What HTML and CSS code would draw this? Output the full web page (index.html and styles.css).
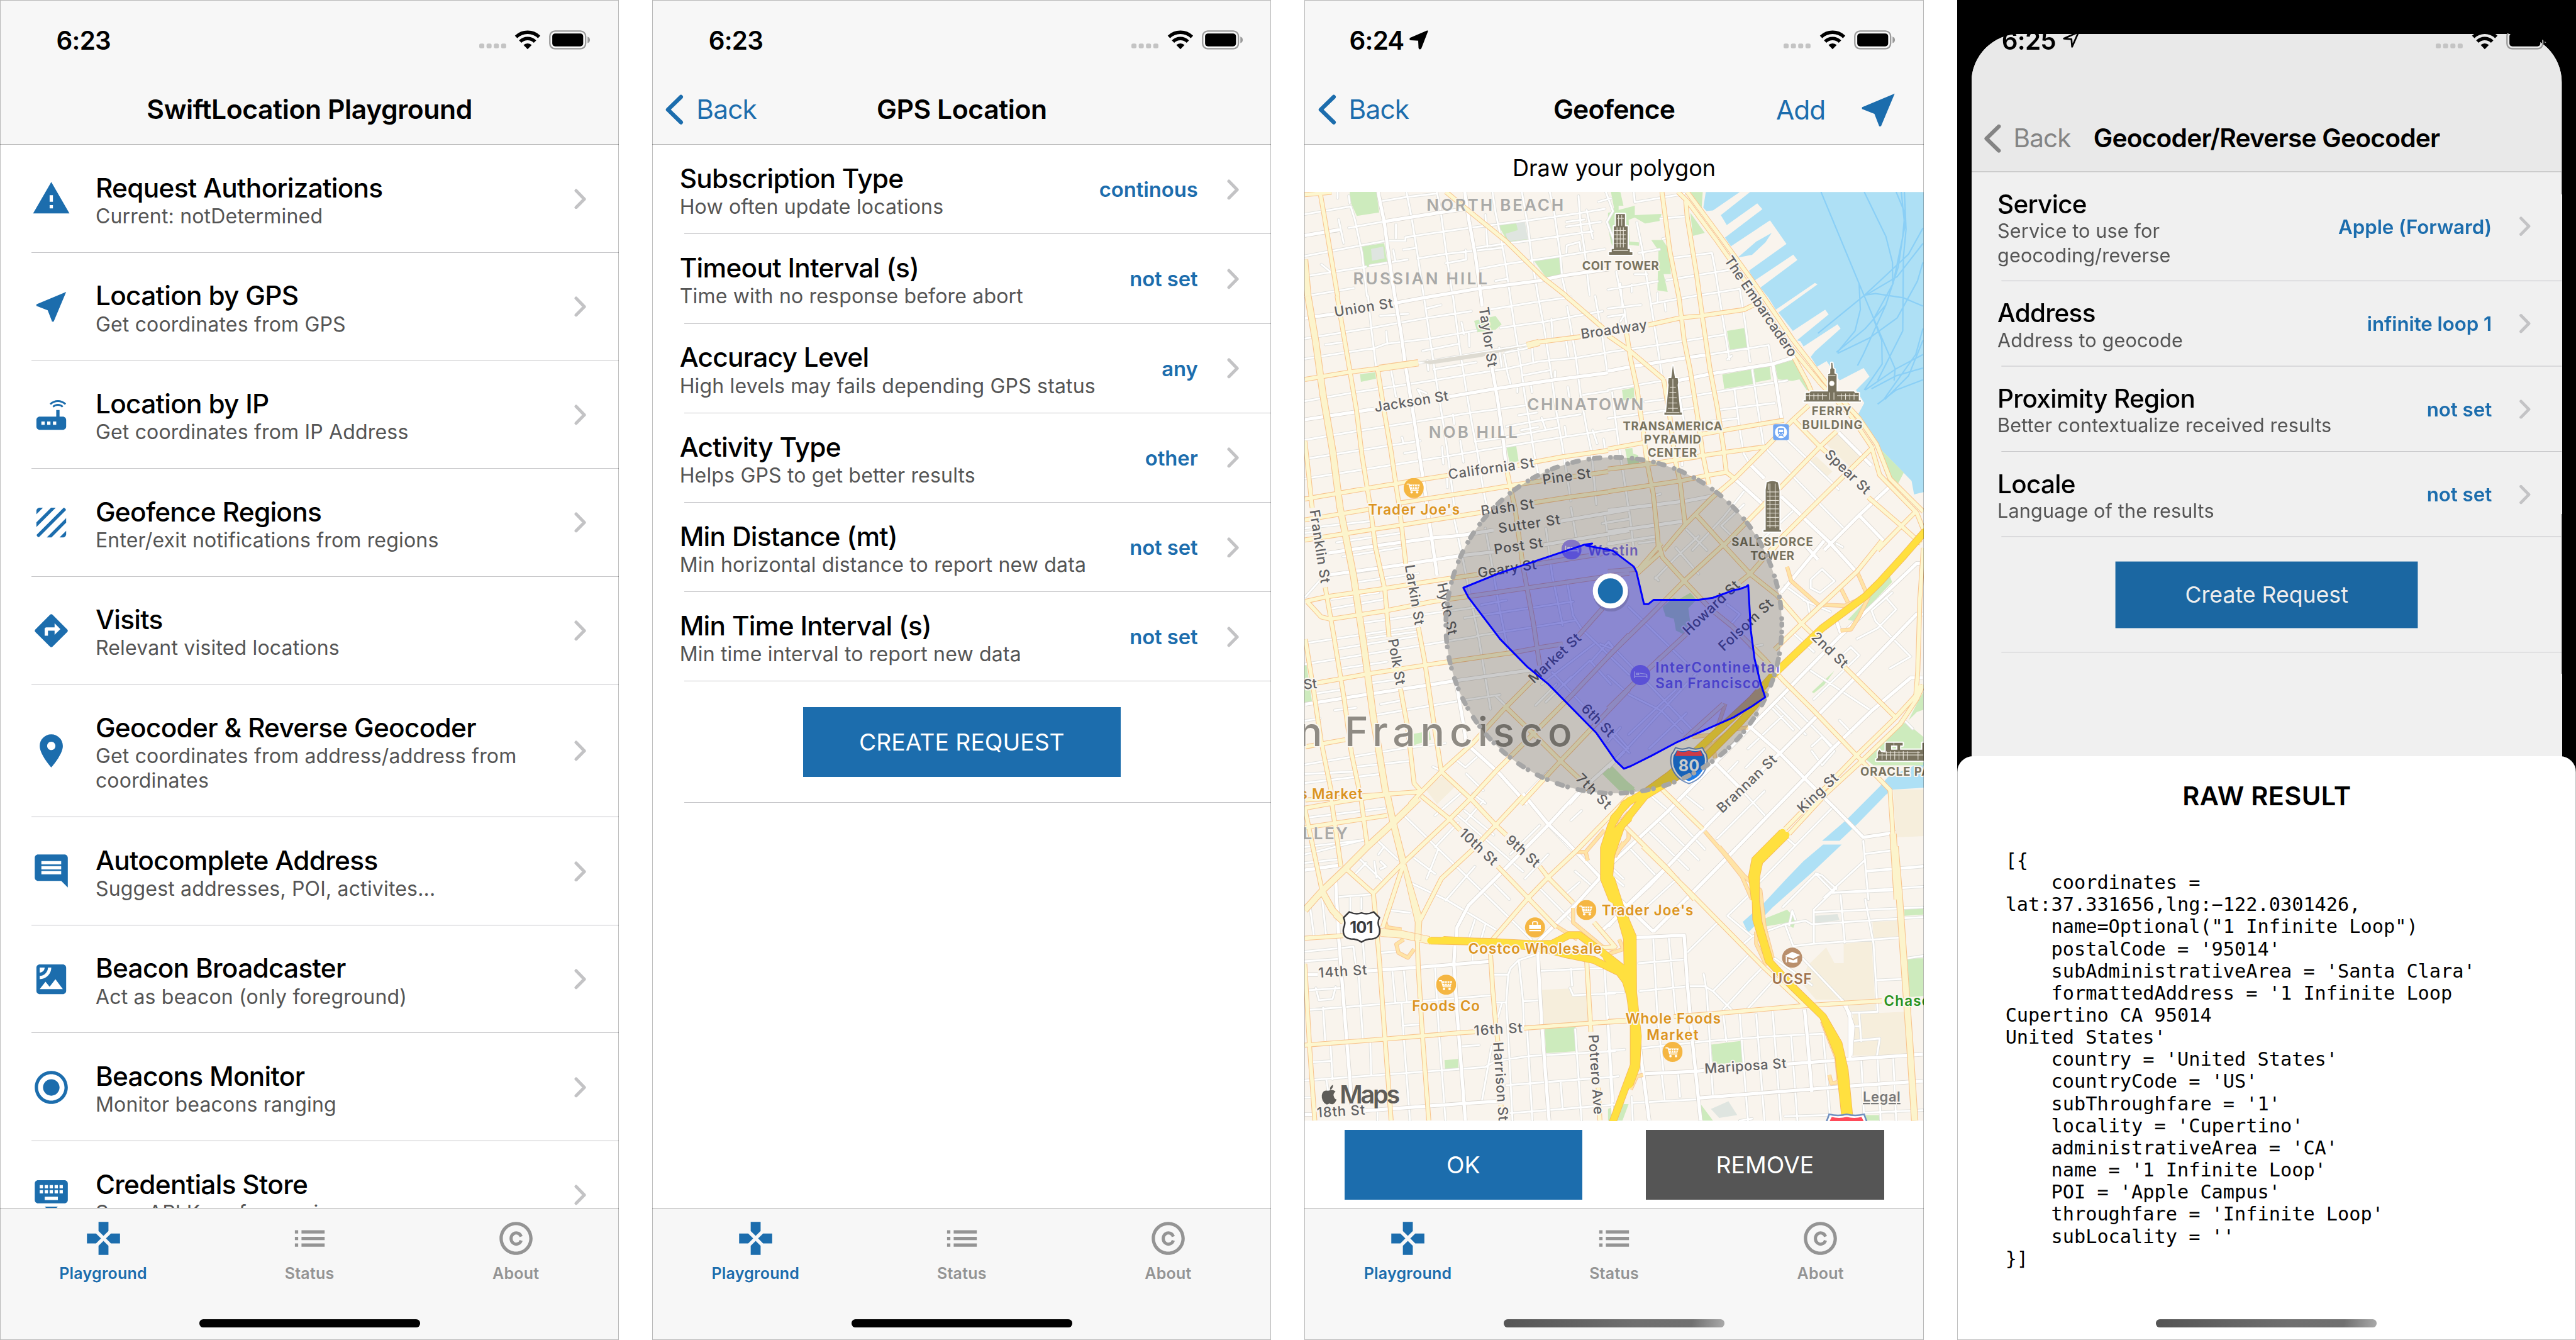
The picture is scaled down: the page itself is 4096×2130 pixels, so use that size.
FILE: index.html
```html
<!DOCTYPE html>
<html lang="en">
<head>
<meta charset="utf-8">
<title>SwiftLocation Playground</title>
<link rel="stylesheet" href="styles.css">
</head>
<body>
<svg class="sprite" aria-hidden="true">
  <symbol id="i-warning" viewBox="0 0 24 24"><path d="M1 21h22L12 2 1 21zm12-3h-2v-2h2v2zm0-4h-2v-4h2v4z"/></symbol>
  <symbol id="i-near" viewBox="0 0 24 24"><path d="M21 3L3 10.53v.98l6.84 2.65L12.48 21h.98L21 3z"/></symbol>
  <symbol id="i-router" viewBox="0 0 24 24"><path d="M20.2 5.9l.8-.8C19.6 3.7 17.8 3 16 3s-3.6.7-5 2.1l.8.8C13 4.8 14.500 4.200 16 4.200s3 .6 4.200 1.700zm-.9.8c-.9-.9-2.100-1.400-3.300-1.400s-2.400.5-3.300 1.400l.8.8c.7-.7 1.600-1 2.500-1 .9 0 1.800.3 2.500 1l.8-.8zM19 13h-2V9h-2v4H5c-1.100 0-2 .9-2 2v4c0 1.100.9 2 2 2h14c1.100 0 2-.9 2-2v-4c0-1.100-.9-2-2-2zM8 18H6v-2h2v2zm3.500 0h-2v-2h2v2zm3.500 0h-2v-2h2v2z"/></symbol>
  <symbol id="i-texture" viewBox="0 0 24 24"><path d="M19.510 3.080L3.080 19.510c.09.34.27.65.51.9.25.24.56.42.9.51L20.930 4.490c-.19-.69-.73-1.230-1.420-1.410zM11.880 3L3 11.880v2.830L14.710 3h-2.830zM5 3c-1.100 0-2 .9-2 2v2l4-4H5zm14 18c.55 0 1.050-.22 1.410-.59.37-.36.59-.86.59-1.410v-2l-4 4h2zm-9.710 0h2.830L21 12.120V9.290L9.290 21z"/></symbol>
  <symbol id="i-directions" viewBox="0 0 24 24"><path d="M21.710 11.290l-9-9c-.39-.39-1.020-.39-1.410 0l-9 9c-.39.39-.39 1.020 0 1.410l9 9c.39.39 1.020.39 1.410 0l9-9c.39-.38.39-1.010 0-1.410zM14 14.500V12h-4v3H8v-4c0-.55.45-1 1-1h5V7.500l3.500 3.500-3.500 3.500z"/></symbol>
  <symbol id="i-place" viewBox="0 0 24 24"><path d="M12 2C8.130 2 5 5.130 5 9c0 5.250 7 13 7 13s7-7.750 7-13c0-3.870-3.130-7-7-7zm0 9.500c-1.380 0-2.500-1.120-2.500-2.500s1.120-2.500 2.500-2.500 2.500 1.120 2.500 2.500-1.120 2.500-2.500 2.500z"/></symbol>
  <symbol id="i-comment" viewBox="0 0 24 24"><path d="M21.990 4c0-1.100-.89-2-1.990-2H4c-1.100 0-2 .9-2 2v12c0 1.100.9 2 2 2h14l4 4-.01-18zM18 14H6v-2h12v2zm0-3H6V9h12v2zm0-3H6V6h12v2z"/></symbol>
  <symbol id="i-satellite" viewBox="0 0 24 24"><path d="M19 3H5c-1.100 0-2 .9-2 2v14c0 1.100.9 2 2 2h14c1.100 0 2-.9 2-2V5c0-1.100-.9-2-2-2zM5 4.990h3C8 6.650 6.660 8 5 8V4.990zM5 12v-2c2.760 0 5-2.250 5-5.010h2C12 8.860 8.870 12 5 12zm0 6l3.500-4.500 2.500 3.010L14.500 12l4.500 6H5z"/></symbol>
  <symbol id="i-radio" viewBox="0 0 24 24"><path d="M12 7c-2.760 0-5 2.240-5 5s2.240 5 5 5 5-2.240 5-5-2.240-5-5-5zm0-5C6.480 2 2 6.480 2 12s4.480 10 10 10 10-4.480 10-10S17.520 2 12 2zm0 18c-4.420 0-8-3.580-8-8s3.580-8 8-8 8 3.580 8 8-3.580 8-8 8z"/></symbol>
  <symbol id="i-keyboard" viewBox="0 0 24 24"><path d="M20 3H4c-1.100 0-1.990.9-1.990 2L2 15c0 1.100.9 2 2 2h16c1.100 0 2-.9 2-2V5c0-1.100-.9-2-2-2zm-9 3h2v2h-2V6zm0 3h2v2h-2V9zM8 6h2v2H8V6zm0 3h2v2H8V9zm-1 2H5V9h2v2zm0-3H5V6h2v2zm9 7H8v-2h8v2zm0-4h-2V9h2v2zm0-3h-2V6h2v2zm3 3h-2V9h2v2zm0-3h-2V6h2v2zm-7 15l4-4H8l4 4z"/></symbol>
  <symbol id="i-games" viewBox="0 0 24 24"><path d="M15 7.500V2H9v5.500l3 3 3-3zM7.500 9H2v6h5.500l3-3-3-3zM9 16.500V22h6v-5.500l-3-3-3 3zM16.500 9l-3 3 3 3H22V9h-5.500z"/></symbol>
  <symbol id="i-list" viewBox="0 0 24 24"><path d="M3 13h2v-2H3v2zm0 4h2v-2H3v2zm0-8h2V7H3v2zm4 4h14v-2H7v2zm0 4h14v-2H7v2zM7 7v2h14V7H7z"/></symbol>
  <symbol id="i-copyright" viewBox="0 0 24 24"><path d="M12 2C6.480 2 2 6.480 2 12s4.480 10 10 10 10-4.480 10-10S17.520 2 12 2zm0 18c-4.410 0-8-3.590-8-8s3.590-8 8-8 8 3.590 8 8-3.590 8-8 8z"/><path d="M15.100 10.900A3.150 3.400 0 1 0 15.100 13.200" fill="none" stroke="currentColor" stroke-width="1.900"/></symbol>
  <symbol id="i-chevron" viewBox="0 0 8 13"><path d="M1.200 1.200L6.400 6.500 1.200 11.800" fill="none" stroke="currentColor" stroke-width="2" stroke-linecap="round" stroke-linejoin="round"/></symbol>
  <symbol id="i-back" viewBox="0 0 12 20"><path d="M10.200 2L2 10l8.200 8" fill="none" stroke="currentColor" stroke-width="2.600" stroke-linecap="round" stroke-linejoin="round"/></symbol>
  <symbol id="i-signal" viewBox="0 0 17 4"><g fill="#c4c4c4"><rect x="0" y=".5" width="3.200" height="3" rx="1"/><rect x="4.600" y=".5" width="3.200" height="3" rx="1"/><rect x="9.200" y=".5" width="3.200" height="3" rx="1"/><rect x="13.800" y=".5" width="3.200" height="3" rx="1"/></g></symbol>
  <symbol id="i-wifi" viewBox="0 0 16 12"><path d="M8 11.500L5.500 9a3.700 3.700 0 0 1 5 0z"/><path d="M3.500 6.900a6.400 6.400 0 0 1 9 0M1 4.100a10 10 0 0 1 14 0" fill="none" stroke="currentColor" stroke-width="2.100"/></symbol>
  <symbol id="i-battery" viewBox="0 0 26 12"><rect x=".5" y=".5" width="22.200" height="11" rx="3.200" fill="none" stroke="#9b9b9b" stroke-width=".9"/><rect x="2" y="2" width="19.200" height="8" rx="1.800"/><path d="M23.900 4v4c1.100-.4 1.500-1.200 1.500-2s-.4-1.600-1.500-2z" fill="#9b9b9b"/></symbol>
  <symbol id="i-cart" viewBox="-19 -19 38 38"><circle r="19" fill="#f5b642"/><path d="M-12.500-7.500h3.800L-5.500 4h14" fill="none" stroke="#fff" stroke-width="2" stroke-linecap="round" stroke-linejoin="round"/><path d="M-8-6.500h19.500L9 1.800H-5.700z" fill="#fff"/><path d="M-2.500-6v7M2-6v7M6.500-6v7M-7-2.400H10" stroke="#f5b642" stroke-width="1.300"/><circle cx="-4" cy="8" r="2.300" fill="#fff"/><circle cx="6.500" cy="8" r="2.300" fill="#fff"/></symbol>
  <symbol id="i-bed" viewBox="-19 -19 38 38"><circle r="19" fill="#a493f5"/><path d="M-11-7V6M-11 2.500H12.500V6M-7-1h4v-2.500h-4zM-1-3.500l11 1.500q2.500.5 2.500 3v2" fill="none" stroke="#fff" stroke-width="1.700"/></symbol>
</svg>

<main class="board">

  <section class="phone">
    <header class="bar">
      <div class="status"><span class="time">6:23</span><svg class="signal"><use href="#i-signal"/></svg><svg class="wifi"><use href="#i-wifi"/></svg><svg class="battery"><use href="#i-battery"/></svg></div>
      <div class="nav"><h1 class="nav-title">SwiftLocation Playground</h1></div>
    </header>
    <ul class="menu">
      <li class="menu-row"><svg class="icon"><use href="#i-warning"/></svg><div class="copy"><h2>Request Authorizations</h2><p>Current: notDetermined</p></div><svg class="chevron"><use href="#i-chevron"/></svg></li>
      <li class="menu-row"><svg class="icon"><use href="#i-near"/></svg><div class="copy"><h2>Location by GPS</h2><p>Get coordinates from GPS</p></div><svg class="chevron"><use href="#i-chevron"/></svg></li>
      <li class="menu-row"><svg class="icon"><use href="#i-router"/></svg><div class="copy"><h2>Location by IP</h2><p>Get coordinates from IP Address</p></div><svg class="chevron"><use href="#i-chevron"/></svg></li>
      <li class="menu-row"><svg class="icon"><use href="#i-texture"/></svg><div class="copy"><h2>Geofence Regions</h2><p>Enter/exit notifications from regions</p></div><svg class="chevron"><use href="#i-chevron"/></svg></li>
      <li class="menu-row"><svg class="icon"><use href="#i-directions"/></svg><div class="copy"><h2>Visits</h2><p>Relevant visited locations</p></div><svg class="chevron"><use href="#i-chevron"/></svg></li>
      <li class="menu-row"><svg class="icon"><use href="#i-place"/></svg><div class="copy"><h2>Geocoder &amp; Reverse Geocoder</h2><p>Get coordinates from address/address from<br>coordinates</p></div><svg class="chevron"><use href="#i-chevron"/></svg></li>
      <li class="menu-row"><svg class="icon"><use href="#i-comment"/></svg><div class="copy"><h2>Autocomplete Address</h2><p>Suggest addresses, POI, activites...</p></div><svg class="chevron"><use href="#i-chevron"/></svg></li>
      <li class="menu-row"><svg class="icon"><use href="#i-satellite"/></svg><div class="copy"><h2>Beacon Broadcaster</h2><p>Act as beacon (only foreground)</p></div><svg class="chevron"><use href="#i-chevron"/></svg></li>
      <li class="menu-row"><svg class="icon"><use href="#i-radio"/></svg><div class="copy"><h2>Beacons Monitor</h2><p>Monitor beacons ranging</p></div><svg class="chevron"><use href="#i-chevron"/></svg></li>
      <li class="menu-row"><svg class="icon"><use href="#i-keyboard"/></svg><div class="copy"><h2>Credentials Store</h2><p>Save API Keys for services</p></div><svg class="chevron"><use href="#i-chevron"/></svg></li>
    </ul>
    <footer class="tabs">
      <div class="tab active"><svg class="icon"><use href="#i-games"/></svg><span>Playground</span></div>
      <div class="tab"><svg class="icon"><use href="#i-list"/></svg><span>Status</span></div>
      <div class="tab"><svg class="icon"><use href="#i-copyright"/></svg><span>About</span></div>
      <div class="home"></div>
    </footer>
  </section>

  <section class="phone">
    <header class="bar">
      <div class="status"><span class="time">6:23</span><svg class="signal"><use href="#i-signal"/></svg><svg class="wifi"><use href="#i-wifi"/></svg><svg class="battery"><use href="#i-battery"/></svg></div>
      <div class="nav"><div class="back"><svg><use href="#i-back"/></svg>Back</div><h1 class="nav-title">GPS Location</h1></div>
    </header>
    <ul class="form">
      <li class="form-row"><div class="copy"><h2>Subscription Type</h2><p>How often update locations</p></div><b>continous</b><svg class="chevron"><use href="#i-chevron"/></svg></li>
      <li class="form-row"><div class="copy"><h2>Timeout Interval (s)</h2><p>Time with no response before abort</p></div><b>not set</b><svg class="chevron"><use href="#i-chevron"/></svg></li>
      <li class="form-row"><div class="copy"><h2>Accuracy Level</h2><p>High levels may fails depending GPS status</p></div><b>any</b><svg class="chevron"><use href="#i-chevron"/></svg></li>
      <li class="form-row"><div class="copy"><h2>Activity Type</h2><p>Helps GPS to get better results</p></div><b>other</b><svg class="chevron"><use href="#i-chevron"/></svg></li>
      <li class="form-row"><div class="copy"><h2>Min Distance (mt)</h2><p>Min horizontal distance to report new data</p></div><b>not set</b><svg class="chevron"><use href="#i-chevron"/></svg></li>
      <li class="form-row"><div class="copy"><h2>Min Time Interval (s)</h2><p>Min time interval to report new data</p></div><b>not set</b><svg class="chevron"><use href="#i-chevron"/></svg></li>
      <li class="form-action"><button class="button">CREATE REQUEST</button></li>
    </ul>
    <footer class="tabs">
      <div class="tab active"><svg class="icon"><use href="#i-games"/></svg><span>Playground</span></div>
      <div class="tab"><svg class="icon"><use href="#i-list"/></svg><span>Status</span></div>
      <div class="tab"><svg class="icon"><use href="#i-copyright"/></svg><span>About</span></div>
      <div class="home"></div>
    </footer>
  </section>

  <section class="phone">
    <header class="bar">
      <div class="status located"><span class="time">6:24</span><svg class="arrow" viewBox="0 0 24 24"><path d="M21.500 2.500L3 10.300q-1.500 1.200 0 1.600l9 .6.400 8.600q.8 1.800 1.800.3z" stroke="#000" stroke-width="1.500" stroke-linejoin="round"/></svg><svg class="signal"><use href="#i-signal"/></svg><svg class="wifi"><use href="#i-wifi"/></svg><svg class="battery"><use href="#i-battery"/></svg></div>
      <div class="nav"><div class="back"><svg><use href="#i-back"/></svg>Back</div><h1 class="nav-title snug">Geofence</h1><div class="tools"><span>Add</span><svg class="locate"><use href="#i-near"/></svg></div></div>
    </header>
    <p class="hint">Draw your polygon</p>
    <svg class="map" viewBox="0 363 1170 1755" preserveAspectRatio="none">
      <defs>
        <g id="minor">
          <path transform="matrix(.38265 0 0 .44643 -6 0)" d="M17 908L245 875 265 930 300 1070 325 1254M235 830L240 860M180 813V840M17 1085L200 1055 420 1020 515 1020V1005L830 965 1110 935 1360 905 1500 885M35 1168L320 1130M340 1125L525 1100M50 1250L260 1220M395 853L520 835 670 820M520 813L545 920 575 1080 605 1254M670 813L690 900 718 1080 748 1254M945 813L960 900 985 1000 1010 1120 1032 1254M1090 813L1120 960 1140 1100 1170 1254M1228 813L1250 900 1280 1080 1290 1180 1310 1254M235 965L400 940M575 1095L720 1075 990 1050M715 1115L815 1100 812 1060M505 1058L570 1050M860 1050L1120 1020 1440 980M870 1140L1000 1120 1280 1085 1500 1055M960 1190L1020 1180M1370 830L1380 950 1400 1060 1425 1250M1410 890L1440 1010M1310 940L1400 930M1310 960L1480 940M1310 1070L1312 1040 1375 1025 1380 1060M1468 855L1530 840M1505 813L1540 895 1510 940 1550 1030M100 1120L150 1155 135 1155M185 930L210 1030M170 980L190 975M455 1060L465 1105M910 910L920 1045M468 950V1010"/>
          <path transform="matrix(.45918 0 0 .33333 -6 560)" d="M275 0L290 200 310 420M505 0L530 240 555 470 580 680 600 860 630 1190M625 0L650 270 680 540 705 740 725 880 750 1100 765 1200M860 0L880 190 905 400 920 560 940 720 960 900 980 1040M975 0L1000 180 1025 400 1050 650 1075 850 1110 1160M1095 60L1130 340 1150 560 1175 750 1195 880 1215 1180M1210 0L1240 230 1260 430M15 240L290 180 510 125 700 85M15 355L300 295 350 270 530 240 720 195M820 180L1000 145 1240 85M780 75L980 30 1110 5M545 415L720 375M500 310L650 270M480 380L930 275M15 595L220 545 440 500 690 445 850 410 980 370 1130 350 1263 320M15 815L250 760 460 715 700 660 920 620M30 920L260 870 490 820M715 825L840 800 1060 745M15 1035L500 930 720 880 850 850 1070 800 1263 760M845 740L940 715 1150 670M895 675L970 660M905 760L975 742M905 782L940 775M370 420L390 570M350 200L355 270M100 275L170 262M660 150L670 215M690 210L692 285M520 365L523 420M815 290L825 400M835 330L850 440 862 500M840 320L930 295M1030 130L1035 230M1090 250L1100 340M950 290L955 370M1045 425V465M580 855L585 950M655 820L668 940M415 800L420 830M425 890L480 878M1200 760L1218 835M1245 810L1250 860M1085 740L1090 790M990 690L1005 750M600 1030L602 1085M625 670L630 725M1160 560L1263 538M910 450L1025 420M890 510V545M945 495L950 545M1098 515L1103 570M515 70L575 50M325 112L440 100M480 530L515 550M480 530L505 590"/>
          <path transform="matrix(.38903 0 0 .44643 574 340)" d="M130 95L370 60M125 52L130 95M255 165L380 155M140 180L165 290 200 480 240 700 265 850M320 330L505 310 520 380 560 600 590 760M580 760L600 745M285 425L600 380M0 465L240 430M210 525L400 495 640 462 665 600 690 770M0 545L160 530M130 400H190M60 440L70 540M115 445V475M240 480V520M275 515L280 555M80 550L95 650M0 730L240 700 570 655M490 740L780 700 795 780M40 390L75 540M265 250L290 245M150 310L250 295M0 890L270 850M340 925L620 885 870 850M615 890L640 1060 660 1160 690 1205M700 800L730 980 755 1120 780 1150M180 940L270 930M530 975L810 945M340 975L420 965M340 1040L630 1010M0 1010L290 975M0 1060L40 1055M20 900L50 1110 75 1250 110 1450 125 1568M780 1150L1150 1480M870 1100L1120 1310M0 1450L100 1437M0 1545L240 1510M550 1465L660 1375M550 1465L640 1540M410 1568L560 1430 660 1320M900 1400L740 1530M230 1335L255 1330M360 1190V1210M1110 1540L1140 1555M60 600L80 570 0 580M350 930L370 1030M380 1480L480 1568"/>
          <path transform="matrix(.39541 0 0 .44643 -6 820)" d="M170 460L480 420M200 520L490 480M240 590L560 545M250 630L560 590M145 740L400 700M145 700L370 672M300 800L830 735M30 885L560 815M180 910L560 855M320 865L550 838M20 975L160 955 580 895 840 858M180 995L410 965M340 1055L460 1040M65 1100L200 1082M160 1170L262 1160M360 1190L760 1130 950 1105M380 1145L470 1130M20 1215L90 1205M690 1310L500 1330 20 1400M260 1410L520 1385M20 1440L250 1430M20 1478L380 1440M20 400L330 370M20 420L90 410M720 313L770 520 800 650 850 870 905 1165M880 400L905 520 950 750 990 920M1170 400L1200 600 1250 810M1290 313L1330 520M860 725L980 705M840 855L1100 820 1310 790M780 780L1000 750 1300 710M1270 620L1300 770 1350 840M1350 835L1568 1020M1170 1135L1290 1030M1200 1010L1500 1290 1568 1350M1430 890L1500 915 1470 880 1390 960M740 1380L785 1412 850 1360M1150 1060L1400 890M1260 1060L1380 960 1480 1060M1220 1060L1120 1150M930 1110L1000 1170M1440 380L1568 360M1450 340L1470 450M1030 1568L1180 1430M790 1440L870 1510M630 1410L680 1430M20 690L90 620"/>
          <path transform="matrix(.38903 0 0 .44643 574 1000)" d="M850 710L1090 920M1280 345L1380 270M1280 345L1300 390 1470 540 1370 590M1400 340L1310 420 1210 465M1400 340L1350 290M1180 500L1220 535 1000 720M1180 500L1130 540M985 600L1280 770M810 740L960 870M680 930L850 790M800 760L900 850M990 920L1040 880 1100 940 1040 1000 990 940M670 1010L760 930M1125 810L1180 860M1440 810L1480 845M210 1130L290 1190 470 1355M250 1240L440 1400M200 1280L390 1440M110 1355L230 1465M380 1130L460 1185M570 1030L770 1220M530 1310L760 1110M570 1040L630 985M910 1340L730 1500M1090 1180L910 1340M870 1310L910 1340M1240 1320L1265 1568M1250 1375L1385 1360M1255 1450L1530 1430M1010 1460L1100 1540M1090 1540L1400 1530M1250 1400L1050 1560M1010 1460L850 1600M0 480L180 640 420 860M100 330L430 610M80 940L260 770 430 610M0 620L100 700 260 770 360 860M0 760L150 640 250 540M100 870L330 680M200 930L380 780M330 80L440 190M230 210L330 120 440 30M230 205L245 218M580 320L640 360 600 400M690 500L750 490M20 850L100 930M990 210L1040 170 1100 220 1030 270 985 250V215M860 240L970 310 980 360M950 300L1080 350M20 1470L75 1510M900 440L1000 520M0 900L60 840M150 60L240 50M0 60L240 30"/>
          <path transform="matrix(.39541 0 0 .45918 -6 1500)" d="M480 80L640 215 790 340 1100 600M655 230L600 350M530 370L700 440 930 560M690 440L830 300M540 265L640 330M750 90L1060 320M870 30L790 110M780 70L920 170M1000 250L1140 130M640 90L760 0M880 40L820 0M1070 350L1180 250M915 365L995 435M1140 390L1290 520M1270 410L1330 365M1310 320L1390 380M1180 130L1300 240M640 220L750 120M180 425L330 415M235 430V490M288 430V475M260 330L310 285M270 260L390 360M360 190L460 270M370 250L395 220M380 310L405 300 380 280M17 650L250 630 260 700M17 690L180 680M295 610L305 720M380 655L450 650M17 810L190 800M70 800L85 850 150 845 165 795M35 890L480 860 910 830M275 750L295 1010M435 720L450 860M490 720L505 860M105 880L115 1020M480 860L490 1000 520 1345M640 715L660 1000 690 1345M485 955L570 950M765 1040L850 1035M140 1030L150 1175M55 1105L145 1100M330 1015L335 1160M17 1180L500 1150 880 1125 930 1100 1090 1080 1500 1060M830 520L800 600M880 540L860 600M920 745L990 745 1000 720 1040 685 1130 660M1040 685L1060 850 1065 960M1060 855L1140 850M990 745L980 860 990 1000 1010 1345M935 860H980M960 860L940 920M1140 730L1500 715M1290 720L1295 790M1285 800L1300 830 1500 822M1450 710L1490 1345M1080 970L1105 1345M910 1040L865 1260M980 1200L1500 1165M1000 1315L1500 1280M1240 1185L1250 1300M1310 970L1340 1345M820 660V690M17 100L400 60M40 450L60 580M100 430L120 590M17 250L300 190M17 285L180 270M17 220L310 190M420 480L520 490M350 280L360 345M1290 110L1340 70M1490 310L1540 350M365 1310V1345M120 1175L130 1230M17 1250H45"/>
          <path transform="matrix(.38903 0 0 .45918 574 1600)" d="M220 380L240 700 270 930M295 375L330 700M150 480L370 465M155 595L390 575 470 575 510 595 610 680M465 525L480 600 510 1030M510 595L690 440M380 440L530 315M580 285L700 370M580 285L690 195M560 670L690 550 760 490M670 675L810 545M560 690L575 800M640 690L680 1128M720 690L760 1128M800 680L840 1128M890 780L920 1128M160 830L490 800 810 780 1045 770 1080 1128M340 930L350 1030M260 930L275 1040M115 1030L120 1128M115 1055L440 1040M0 600H75M0 840L80 835M0 950L50 945M0 700L25 1050M700 370L860 320 960 305 990 320 1530 290M900 410L1000 400 1420 375M1000 400V260L1110 170M1000 270L1530 250M1130 200L1150 395M1090 190L1530 165M860 320L900 410M880 325L895 265 910 300M1010 110L1040 120 1110 175M1255 100L1530 80M1250 218L1290 400 1310 680 1180 685M1300 550L1430 545M945 460L1135 630M1220 690L1230 800M1190 740H1220M1190 800L1320 790 1305 870M1230 870L1245 1128M1310 870L1325 1128M1385 860L1400 1128M1450 460L1530 450M1250 1095L1530 1085M810 460L990 570M860 1110L1070 1105M170 260L340 130M700 1120L640 1128M660 400L700 370"/>
        </g>
        <g id="street">
          <path transform="matrix(.38265 0 0 .44643 -6 0)" d="M380 813L410 940 440 1130 462 1254M808 813L830 940 860 1080 888 1254M17 998L190 973M400 940L545 920 690 900 815 885M455 1285L600 1262 880 1222 1170 1190 1290 1168 1520 1140"/>
          <path transform="matrix(.45918 0 0 .33333 -6 560)" d="M385 0L410 200 430 400 465 700 490 930 515 1150 520 1200M740 0L745 60M785 400L810 600 835 850 842 950M15 125L140 100M15 700L230 655 300 640M610 570L800 525 1040 475 1263 435"/>
          <path transform="matrix(.38903 0 0 .44643 574 340)" d="M0 810L120 790 370 755 490 740M340 850L510 820 800 780 930 745M800 780L820 880 843 1010M0 1400L380 1360 500 1340M0 1490L370 1445M690 1205L760 1265M620 1270L760 1380M840 1340L1070 1530 1110 1568M1380 1290L1220 1420 1050 1568M1120 1070L1280 1210M1220 1420L1340 1530"/>
          <path transform="matrix(.39541 0 0 .44643 -6 820)" d="M602 313L650 600M740 1050L770 1200 790 1310M130 505L390 470 640 440 770 430 920 408M110 600L440 560 770 515 920 500M20 1145L340 1100 600 1065 740 1045 1100 1000M1240 370L1568 320M1160 470L1568 410M800 1320L950 1440 1080 1568M1500 1380L1350 1500 1280 1568"/>
          <path transform="matrix(.38903 0 0 .44643 574 1000)" d="M1050 50L840 270M1070 50L1210 185M960 70L1020 130M1530 145H1500L1120 460 850 700 520 990 290 1195 0 1430M1530 360H1500L1200 630 840 945 700 1060 470 1265 200 1510 100 1590M1530 630H1470L1280 770 1090 930 960 1050 770 1220 580 1390 380 1568M680 830L830 945 960 1060 1100 1180 1240 1305 1400 1285M520 990L640 1095M0 1010L80 940M1110 390L1130 440"/>
          <path transform="matrix(.39541 0 0 .45918 -6 1500)" d="M165 360L180 600 205 880 235 1200 240 1280M17 315L180 295M17 745H80M310 730L560 715 910 690M735 625L730 700 745 900 785 1345M740 600L745 550 800 460 940 340 1180 130 1320 0M1060 0L1180 125 1270 200 1430 345 1320 450 1130 610M1130 650L1150 950 1185 1345M17 1320H60M300 1305L780 1275 960 1265M1430 570L1520 500"/>
          <path transform="matrix(.38903 0 0 .45918 574 1600)" d="M220 350L410 190 620 10M60 220L220 350M95 240L290 80M0 330L60 270M135 375L370 365 385 560 410 800 450 1128M150 800L200 1128M180 935L430 925 470 920M870 895L1110 880 1180 875 1530 855M440 1035L1110 990 1180 985 1530 965M955 670L970 800 990 1010M1135 630L1175 690V870M1150 640L1190 740 1180 860"/>
        </g>
        <g id="avenue">
          <path transform="matrix(.38265 0 0 .44643 -6 0)" d="M17 825L150 815M93 813L115 920 150 1100 180 1254M715 813L830 895 1010 1020 1200 1180 1310 1254"/>
          <path transform="matrix(.45918 0 0 .33333 -6 560)" d="M148 0L170 180 200 420 228 650 250 900 285 1200M15 472L200 430 320 410M315 420L345 680 370 880 390 1070 405 1200M15 820L30 1000 45 1200M15 1150L270 1090 500 1038 610 1015M395 1175L510 1150 750 1100 870 1072 1000 1045 1190 1010 1263 995M890 960L960 940 1080 910 1263 875M842 950L860 1080 880 1200M930 280L980 260 1150 230M1090 0L1200 130 1263 205M960 1170L1100 1140 1263 1110"/>
          <path transform="matrix(.38903 0 0 .44643 574 340)" d="M262 52L300 300 345 500 370 680 400 810 440 1030 460 1160 490 1290M378 90L385 160 430 400 460 590 495 800 530 960 560 1130 575 1240M340 52L385 90 530 260 700 470 860 680 1030 860 1180 1000 1280 1130 1320 1250 1500 1410 1532 1480M385 52L545 240 720 450 900 680 1060 860 1220 1010 1305 1120 1370 1265 1532 1405M905 755L970 860 1010 940M195 615L350 585 460 575 660 550 720 525M0 660L100 720 270 845M90 650L110 760 140 880 170 1060 190 1200 220 1330 240 1500 245 1568M270 845L300 1000 325 1180 350 1280 375 1460M0 1140L190 1110M440 1080L600 1055 855 1018M440 1170L560 1155 770 1130M0 1225L190 1205 440 1172M0 1320L350 1275 490 1250 575 1238 615 1265M975 955L900 1015 770 1130 615 1265 500 1350 375 1460 270 1568M900 1015L1030 1130 1070 1160M1265 1345L1425 1465 1520 1540M1110 1065L1030 1130 840 1300 740 1390 560 1550M1290 1130L1010 1370 860 1500 800 1568M1500 1400L1420 1470 1310 1568M430 1420L560 1545"/>
          <path transform="matrix(.39541 0 0 .44643 -6 820)" d="M115 650L155 850 205 1120 240 1350 280 1520M20 870L60 1090 95 1300 145 1520M331 313L355 480 400 660 420 860M475 1080L510 1250 540 1480 575 1515M470 313L500 550M560 820L590 960 630 1200 670 1430M1022 313L1060 560 1110 800 1140 980M17 365L320 320M17 450L340 405 490 385 740 350 880 330M20 710L120 690 400 655 650 620 850 595M1100 555L1568 490M30 712L95 775 140 785 400 750 630 710 830 685 1568 590M75 1055L330 1015 590 980 860 945 1020 925 1140 905 1250 890M20 1325L210 1295M20 1550L575 1515M1440 740L1300 880M1110 1040L970 1165 820 1310 670 1430 575 1515 520 1568M1568 850L1450 960 1290 1110 1110 1270 940 1420 810 1545M1568 1080L1240 1385 1050 1568M970 1150L1110 1270 1240 1385 1330 1460M670 1430L810 1545"/>
          <path transform="matrix(.38903 0 0 .44643 574 1000)" d="M245 60L265 120 370 220 500 340 600 410 760 550 850 640 1000 770 1220 970 1370 1105 1385 1300M560 67L690 190 820 280 940 400 1000 450M1150 585L1400 800M1532 660L1500 720 1420 825 1235 980 1060 1120 880 1290M1520 660L1490 710 1395 800 1200 965 860 1270M1532 80L1515 300 1505 600 1495 710M560 67L370 220 200 370 0 540M860 20L690 190 640 225M380 445L200 590 0 760M1330 50L1210 180 940 400 810 510M560 740L370 890M0 1230L80 1160M55 1235L280 1430 420 1568M260 1100L460 1270M0 180L150 170 260 60M255 100L140 190"/>
          <path transform="matrix(.39541 0 0 .45918 -6 1500)" d="M17 60L180 35 400 5M17 60L100 400M160 500L200 530M17 140L410 90M140 0L165 150 190 300M283 0L315 210M215 310L345 410 355 500 375 700 400 1000 430 1345M345 410L470 300 710 105 810 20M390 550L470 340 490 290M570 520L670 350 820 230 930 130 1060 10M575 10L710 105 760 150M940 300L1085 430 1220 550M810 20L930 130 980 170M1140 300L1180 345 1300 450M1400 530L1500 630 1360 640M915 600L1085 430 1180 345 1310 240 1490 80 1568 10M17 595L200 585M905 660L915 800 930 950 940 1020M955 1280L960 1345M17 1035L400 1010 750 985 830 980M1065 965L1380 945 1568 935M1365 690L1385 980M1420 1210L1428 1345M17 700L40 1040 65 1345M555 600L560 720 580 1000 610 1345"/>
          <path transform="matrix(.38903 0 0 .45918 574 1600)" d="M170 0L400 190 760 500 950 650M0 720L85 715M320 700L550 685 950 655 1330 635"/>
        </g>
        <g id="boulevard">
          <path transform="matrix(.38265 0 0 .44643 -6 0)" d="M17 1100L33 1254"/>
          <path transform="matrix(.45918 0 0 .33333 -6 560)" d="M28 0L60 260 90 560 130 880 160 1200M320 410L482 378M930 280L980 262"/>
          <path transform="matrix(.39541 0 0 .44643 -6 820)" d="M186 313L250 600 300 900 345 1200 405 1523"/>
          <path transform="matrix(.39541 0 0 .45918 -6 1500)" d="M410 0L440 120 490 290M17 480L100 400 210 310 320 215 440 120 560 20M95 395L150 480 200 525"/>
          <path transform="matrix(.38903 0 0 .45918 574 1600)" d="M1395 0L1415 200 1440 500 1465 800 1490 1128"/>
          <path transform="matrix(.38903 0 0 .44643 574 1000)" d="M1385 1290L1405 1568"/>
        </g>
        <g id="ramp">
          <path transform="matrix(.38903 0 0 .44643 574 1000)" d="M1210 180L1265 290 1220 370 1180 425 1130 430M870 160L890 220 1020 320 1150 325 1240 290M1125 240L1165 310M470 1280L560 1370 650 1470 700 1568M410 880L520 870 570 740M520 970L510 900M680 840L600 850 440 960M30 1270L100 1200M10 1400L100 1310V1270"/>
          <path transform="matrix(.39541 0 0 .45918 -6 1500)" d="M490 600L455 620 465 655 510 675 540 640M400 520L410 550 480 560M1320 240L1360 240 1370 275M1360 240L1450 150M1300 470V530L1440 630 1500 640M1210 540L1320 600M1540 200L1500 260M1520 600L1540 640 1470 660"/>
          <path transform="matrix(.38903 0 0 .45918 574 1600)" d="M540 0L660 120 740 180 760 330 800 460M720 350V400L770 490M110 1000L140 945 170 940M1075 940L1085 975 1115 970M1040 720L1110 870 1120 960"/>
        </g>
        <g id="freeway">
          <path transform="matrix(.38903 0 0 .44643 574 1000)" d="M1540 10L1430 120 1320 225 1250 285 1040 420 800 620 700 720 440 930 300 1040 180 1115 80 1165 15 1255 -20 1350 -20 1480 20 1568M760 700L640 820 480 960 330 1050 180 1130 65 1255 15 1380 5 1480 40 1568M848 1283L715 1400 700 1470 713 1568M866 1295L735 1408 720 1470 718 1568"/>
          <path transform="matrix(.39541 0 0 .45918 -6 1500)" d="M618 605L900 610 1130 620 1200 618 1280 582 1330 582 1420 640 1568 740M680 602L900 612 1100 630M1150 635L1260 660 1400 685 1520 735 1568 790M1575 25L1495 100 1465 190 1458 330 1520 480 1568 600M1568 100L1510 150 1475 240"/>
          <path transform="matrix(.38903 0 0 .45918 574 1600)" d="M5 132L45 240 92 380 95 520 105 600 125 720 125 900 20 1140M15 132L60 250 120 370 122 600 145 780 138 905 105 980M-10 455L40 500 85 550 110 620M715 150L720 300 780 470 900 580 1045 700 1120 860 1152 1110M708 150L730 310 785 470M1045 700L1120 810 1150 920 1172 1110"/>
        </g>
      </defs>

      <rect y="363" width="1170" height="1755" fill="#f9f4ed"/>

      <g class="beige">
        <path transform="matrix(.38903 0 0 .44643 574 340)" d="M1050 1110L1110 1075 1240 1180 1180 1220zM985 1190L1010 1170 1090 1235 1060 1260z"/>
        <path transform="matrix(.38903 0 0 .44643 574 1000)" d="M1385 1103H1532V1300L1400 1305z"/>
        <path transform="matrix(.39541 0 0 .45918 -6 1500)" d="M1150 808L1285 802 1300 835 1370 830 1378 940 1160 950z"/>
        <path transform="matrix(.38903 0 0 .45918 574 1600)" d="M970 490L1060 415 1100 480H1145V400L1280 390 1300 680H1180L1130 630H1010L940 560zM1285 310L1410 305 1420 370 1290 380zM1190 690L1440 680 1455 860H1190z"/>
        <path transform="matrix(.39541 0 0 .44643 -6 820)" d="M590 1500L690 1440 740 1490 650 1568z"/>
      </g>
      <g class="water">
        <path transform="matrix(.38903 0 0 .44643 574 340)" d="M475 52L463 118 478 133 510 130 640 52H690L548 150 577 192 725 100 750 125 568 245 597 282 787 172 867 272 825 298 685 385 710 428 900 317 920 340 740 457 780 500 815 550 1005 437 1018 443 828 562 898 640 1055 550 1072 570 918 680 935 684 950 706 1115 612 1130 630 1005 727 985 750 1015 792 1062 768 1125 850 1242 797 1270 833 1205 890 1245 945 1205 1010 1245 1055 1310 1128 1475 1275 1487 1332 1534 1322V52zM630 330L720 262 795 225 765 265 700 318z"/>
        <path transform="matrix(.38903 0 0 .44643 574 1000)" d="M1360 1050L1534 985V1095L1385 1103 1350 1125 1210 1250 1125 1320H1040L1160 1230 1320 1090z"/>
        <path transform="matrix(.38903 0 0 .45918 574 1600)" d="M1135-8L1000 100 800 250 680 355 655 310 760 230 870 130 950 60 1045-8z"/>
      </g>
      <path class="ferry" transform="matrix(.38903 0 0 .44643 574 340)" d="M1035 52L1220 440 1340 690 1395 800 1390 850M1245 52L1350 240 1382 350 1383 440M1400 52L1442 140 1432 240 1410 370 1350 530 1240 740 1212 787M1440 52L1448 210 1435 330 1432 640 1310 850M1530 205L1460 315 1350 405 1245 490 1020 650M1530 270L1405 410 1250 490M1220 440L1226 550 1200 640 1115 730M1250 488L1300 482 1435 500 1530 535M1350 530L1250 630 1110 730M1530 350L1503 430 1405 585 1270 670 1115 735M1530 630L1495 740 1340 930M1530 740L1400 800 1250 890M1530 797L1400 830 1280 885M1530 847L1400 890 1310 950M1290 590L1330 680 1332 780 1245 890M1530 680L1460 830 1345 930M1425 52L1442 200 1385 440 1290 590"/>
      <g class="park">
        <path transform="matrix(.38265 0 0 .44643 -6 0)" d="M240 813H372L385 900 275 915 240 850zM295 1045L410 1030 425 1110 310 1135zM975 955L1060 945 1120 1015 1020 1025zM1150 1105L1275 1090 1290 1160 1210 1175zM1530 813H1568V1040H1535L1515 940 1545 880z"/>
        <path transform="matrix(.45918 0 0 .33333 -6 560)" d="M242 442L305 432 308 468 246 486zM845 855L885 848 895 935 858 945zM712 140L800 112 825 160 800 190 725 205z"/>
        <path transform="matrix(.38903 0 0 .44643 574 340)" d="M400 140L470 225 412 238zM400 52H460L455 120zM578 640L662 628 678 710 592 720zM555 825L695 803 705 865 565 885zM708 800L785 792 792 845 715 858zM812 785L905 762 985 890H965L930 845 895 852 825 845zM68 890L125 880 128 925 75 935zM0 140L130 110V150L260 145 250 175 180 185 130 160 100 170 105 262 150 265V280L15 270 0 200zM210 255L265 255 300 300 305 400H270L290 475 240 468 245 300zM83 1140L118 1135 122 1160 145 1165 152 1205 98 1208zM1310 1128L1437 1240 1410 1285 1360 1250zM20 52H60L75 110H40z"/>
        <path transform="matrix(.39541 0 0 .44643 -6 820)" d="M15 980L25 975 52 1135 15 1140zM535 1270L615 1258 620 1295 540 1318zM1440 1440L1480 1400 1600 1510H1520z"/>
        <path transform="matrix(.38903 0 0 .44643 574 1000)" d="M265 330L320 290 340 300 400 270 430 300 390 335 400 400 365 445 330 430 320 380 280 370zM1370 200L1380 225 1200 390 1165 385 1265 290zM1400 830L1450 820 1532 880V1000H1290L1245 970zM1532 690V765L1500 775 1460 810 1500 740zM0 1000L130 1095 90 1120 0 1040zM990 690L1100 600 1050 660 1000 695zM470 930L510 895 515 920 480 945z"/>
        <path transform="matrix(.39541 0 0 .45918 -6 1500)" d="M1165 968L1312 960V1060L1170 1068zM685 1097L750 1092 752 1130 688 1134z"/>
        <path transform="matrix(.38903 0 0 .45918 574 1600)" d="M1455 460H1532V615L1465 620zM500 815L648 800 655 890 510 895zM750 300L870 260 915 300 900 335 860 315 760 330zM450 1060L510 1128H460zM0 1080L50 1060H100L70 1128H0zM1440 260L1532 250V280L1440 285zM1250 1105H1320V1128H1250z"/>
      </g>
      <g class="slab">
        <path transform="matrix(.38265 0 0 .44643 -6 0)" d="M345 1055L405 1045 412 1095 350 1105zM1010 990L1070 975 1062 945 1105 940 1120 1012 1022 1022z"/>
        <path transform="matrix(.38903 0 0 .45918 574 1600)" d="M500 1080L585 1048 628 1105 540 1117zM1005 285L1115 278 1125 303 1005 315z"/>
      </g>

      <use href="#minor" class="minor-case"/><use href="#minor" class="minor-fill"/>
      <path transform="matrix(.45918 0 0 .33333 -6 560)" d="M495 372L930 280 740 345 530 387z" fill="#dedbd2"/>
      <use href="#street" class="street-case"/><use href="#street" class="street-fill"/>
      <use href="#ramp" class="ramp-case"/><use href="#ramp" class="ramp-fill"/>
      <use href="#avenue" class="avenue-case"/><use href="#boulevard" class="boulevard-case"/>
      <g class="plaza"><path transform="matrix(.39541 0 0 .45918 -6 1500)" d="M480 290L502 290 578 510 572 606 543 606 545 530zM380 555L480 563 615 588V620L480 595 380 588z"/></g>
      <use href="#avenue" class="avenue-fill"/><use href="#boulevard" class="boulevard-fill"/>
      <use href="#freeway" class="freeway-case"/><use href="#freeway" class="freeway-fill"/>

      <g class="landmark">
        <path d="M589 405h17v23h5v43h4v6h5v5h-44v-5h5v-6h4v-43h4z"/>
        <path d="M696.600 691l4 24h5l1 8-1 5 5 52h3v4h-33v-4h3l5-52-1-5 1-8h5z"/>
        <path d="M996 686h2l1 10 3 2v8l4 2v32h33l2 3h7v14h4v2H944v-2h4v-14h7l2-3h33v-32l4-2v-8l2-2z"/>
        <path d="M874 912q11-5 21 0l3 14v76h3v3h-33v-3h4v-76z"/>
        <path d="M1099 1404h15v5h-5v8h12v-8h-6v-5h16v5h-5v8h42v-13h4v34h-91v-3l3-2v-11l3-5 3 4h9z"/>
      </g>
      <g class="landmark-detail">
        <path d="M591 413h13M594 407v20M600 407v20M586 436h22M586 444h22M586 452h22M586 460h22M591 430v38M597 430v38M603 430v38M584 474h28"/>
        <path d="M696.600 716v62M691 732h11M690 742h13M689 752h15M688 762h17M687 772h19M684 780h25"/>
        <path d="M948 748h40M1007 748h40M955 744v12M963 744v12M971 744v12M979 744v12M1015 744v12M1023 744v12M1031 744v12M1039 744v12M990 710h14M993 742v14M1001 742v14"/><circle cx="997" cy="725" r="4.500"/>
        <path d="M874 930h23M874 938h23M874 946h23M874 954h23M874 962h23M874 970h23M874 978h23M874 986h23M874 994h23M880 914v84M890 914v84M878 914v12"/>
        <path d="M1085 1427h85M1092 1420v16M1100 1420v16M1108 1420v16M1116 1420v16M1124 1420v16M1132 1420v16M1140 1420v16M1160 1420v16M1094 1422h70"/>
      </g>
      <g class="poi-brown">
        <text x="525" y="510.500" textLength="145">COIT TOWER</text>
        <text x="602" y="813" textLength="188">TRANSAMERICA</text>
        <text x="642" y="838" textLength="108">PYRAMID</text>
        <text x="649" y="863" textLength="93">CENTER</text>
        <text x="959" y="785.500" textLength="75">FERRY</text>
        <text x="941" y="811" textLength="114">BUILDING</text>
        <text x="807.500" y="1032.600" textLength="154">SALESFORCE</text>
        <text x="843" y="1058" textLength="83">TOWER</text>
        <text x="1051" y="1466.500" textLength="164">ORACLE PARK</text>
      </g>
      <g class="district">
        <text x="231" y="398.600" textLength="259">NORTH BEACH</text>
        <text x="92" y="537.500" textLength="254">RUSSIAN HILL</text>
        <text x="421" y="775" textLength="220">CHINATOWN</text>
        <text x="235" y="827.700" textLength="168">NOB HILL</text>
        <text x="-52" y="1586" textLength="134">VALLEY</text>
      </g>
      <g class="city">
        <text x="-12" y="1410">n</text>
        <text x="76" y="1410" textLength="430">Francisco</text>
      </g>
      <g class="road">
        <text transform="translate(58 599) rotate(-9)" textLength="112">Union St</text>
        <text transform="translate(330 582) rotate(81.500)" textLength="114">Taylor St</text>
        <text transform="translate(524 641) rotate(-8.500)" textLength="126">Broadway</text>
        <text transform="translate(134 779) rotate(-9)" textLength="141">Jackson St</text>
        <text transform="translate(793 492) rotate(55.900)" textLength="223">The Embarcadero</text>
        <text transform="translate(982 861) rotate(43.800)" textLength="108">Spear St</text>
        <text transform="translate(273 906) rotate(-8)" textLength="164">California St</text>
        <text transform="translate(451.500 916) rotate(-8)" textLength="92">Pine St</text>
        <text transform="translate(335 975) rotate(-8)" textLength="101">Bush St</text>
        <text transform="translate(368 1008) rotate(-8.500)" textLength="118">Sutter St</text>
        <text transform="translate(360 1048) rotate(-8.500)" textLength="93">Post St</text>
        <text transform="translate(329 1092) rotate(-8.500)" textLength="112">Geary St</text>
        <text transform="translate(10 965) rotate(81.400)" textLength="140">Franklin St</text>
        <text transform="translate(190 1069) rotate(80.500)" textLength="115">Larkin St</text>
        <text transform="translate(251 1103.500) rotate(78)" textLength="100">Hyde St</text>
        <text transform="translate(158 1209) rotate(80)" textLength="88">Polk St</text>
        <text transform="translate(-1 1303) rotate(-5)">St</text>
        <text transform="translate(434 1293) rotate(-43)" textLength="124">Market St</text>
        <text transform="translate(522 1341) rotate(45)" textLength="76">6th St</text>
        <text transform="translate(512 1473) rotate(45)" textLength="82">7th St</text>
        <text transform="translate(726 1202) rotate(-43.500)" textLength="136">Howard St</text>
        <text transform="translate(793 1232) rotate(-43)" textLength="130">Folsom St</text>
        <text transform="translate(957 1206) rotate(44)" textLength="84">2nd St</text>
        <text transform="translate(790 1538) rotate(-43.700)" textLength="145">Brannan St</text>
        <text transform="translate(942 1538) rotate(-43.500)" textLength="95">King St</text>
        <text transform="translate(291 1577) rotate(43)" textLength="88">10th St</text>
        <text transform="translate(379 1590) rotate(42)" textLength="76">9th St</text>
        <text transform="translate(27 1847.600) rotate(-3.500)" textLength="92">14th St</text>
        <text transform="translate(321 1957) rotate(-3.500)" textLength="92">16th St</text>
        <text transform="translate(357 1970) rotate(86)" textLength="149">Harrison St</text>
        <text transform="translate(537 1956) rotate(86)" textLength="151">Potrero Ave</text>
        <text transform="translate(24 2112) rotate(-3.500)" textLength="91">18th St</text>
        <text transform="translate(757 2029) rotate(-4)" textLength="155">Mariposa St</text>
      </g>
      <g class="poi">
        <text x="120.500" y="972.700" textLength="173">Trader Joe's</text>
        <text x="-9" y="1510" textLength="119">s Market</text>
        <text x="310" y="1803" textLength="252">Costco Wholesale</text>
        <text x="562" y="1730" textLength="173">Trader Joe's</text>
        <text x="203.600" y="1911" textLength="128">Foods Co</text>
        <text x="607" y="1935" textLength="180">Whole Foods</text>
        <text x="647" y="1965" textLength="98">Market</text>
        <text x="884" y="1859.400" textLength="75" fill="#a0724c">UCSF</text>
        <text x="1095.500" y="1900.700" letter-spacing="1.500" fill="#2a9320">Chase Center</text>
        <text x="535.700" y="1050" textLength="95" fill="#8676e2">Westin</text>
        <text x="663.500" y="1271.400" textLength="235" fill="#8676e2">InterContinental</text>
        <text x="663.500" y="1301" textLength="198" fill="#8676e2">San Francisco</text>
      </g>
      <use href="#i-cart" x="187.700" y="903.700" width="38" height="38"/>
      <use href="#i-cart" x="514" y="1701" width="38" height="38"/>
      <use href="#i-cart" x="249" y="1842" width="38" height="38"/>
      <use href="#i-cart" x="677" y="1969" width="38" height="38"/>
      <use href="#i-bed" x="486" y="1019.700" width="38" height="38"/>
      <use href="#i-bed" x="616" y="1257" width="38" height="38"/>
      <g transform="translate(436 1753)"><circle r="19" fill="#f5b642"/><path d="M-11-5h22v8h-22zM-11 4.500h22V7h-22z" fill="#fff"/><path d="M-4.500-5.500v-3q0-2.500 2.500-2.500h4q2.500 0 2.500 2.500v3" fill="none" stroke="#fff" stroke-width="1.800"/></g>
      <g transform="translate(922 1810)"><circle r="19" fill="#b98f6c"/><path d="M-14-3L0-11 15-5 2 2zM-7 2l9 3 8-4v8L2 10-7 8z" fill="#fff"/><path d="M-11-2V9" stroke="#fff" stroke-width="1.800"/></g>
      <g transform="translate(901 817)"><rect x="-15" y="-15" width="30" height="30" rx="4" fill="#72a6f2"/><circle r="11.500" fill="#fff"/><rect x="-6" y="-8" width="12" height="12.500" rx="2.500" fill="#72a6f2"/><rect x="-4" y="-4.500" width="8" height="4.500" fill="#fff"/><circle cx="-3" cy="2.300" r="1" fill="#fff"/><circle cx="3" cy="2.300" r="1" fill="#fff"/><path d="M-4.500 8.500l2.500-4M4.500 8.500L2 4.500M-3 6.500h6" stroke="#72a6f2" stroke-width="1.400"/></g>
      <g transform="translate(727 1446)"><path d="M-24-31Q-12-26 0-31 12-26 24-31 27-24 31-19 34-8 31 3 24 25 0 33-24 25-31 3-34-8-31-19-27-24-24-31z" fill="#1e7be6" stroke="#fff" stroke-width="4"/><path d="M-24-31Q-12-26 0-31 12-26 24-31 27-24 31-19 34-8 31 3 24 25 0 33-24 25-31 3-34-8-31-19-27-24-24-31z" transform="scale(1.060)" fill="none" stroke="#6f8fc0" stroke-width="2"/><path d="M-22-27Q-11-22 0-27 11-22 22-27L26-17H-26z" fill="#ff4a59"/><text class="route" y="12" fill="#fff" text-anchor="middle">80</text></g>
      <g transform="translate(1025 2140)"><path d="M-29-31Q-14-27 0-31 14-27 29-31 33-24 37-15H-37Q-33-24-29-31z" fill="#ff4a59" stroke="#fff" stroke-width="3"/><path d="M-40-15L-33-34Q-16-30 0-34 16-30 33-34L40-15" fill="none" stroke="#6f8fc0" stroke-width="2.500"/></g>
      <g transform="translate(108 1752.500)"><path d="M-23-29Q-11-23 0-27 11-23 23-29L34-18Q29-9 34 2 37 20 20 22 8 22 0 28-8 22-20 22-37 20-34 2-29-9-34-18z" fill="#fff" stroke="#3a3a3c" stroke-width="2.500" stroke-linejoin="round"/><text class="route" y="11" fill="#3a3a3c" text-anchor="middle" textLength="44">101</text></g>

      <circle cx="585" cy="1182" r="317.500" fill="#000" fill-opacity=".2"/>
      <circle class="fence" cx="585" cy="1182" r="317.500"/>
      <path class="area" d="M300.500 1111L370 1083 528 1030 544 1027.600 532 1031 583 1041 622.600 1071 627.700 1081 642 1142H650L660 1134H745L772 1130 813 1115 821 1114 835 1109 839 1106 844 1192 851 1245.500 862 1290 871 1318 846 1335 811 1356 702 1404 656 1428.600 617 1448 604 1453 588 1437.500 551.500 1385 461 1293 421 1260 370 1208 310 1129z"/>
      <circle cx="580" cy="1122" r="34" fill="#000" fill-opacity=".13"/>
      <circle cx="578.500" cy="1117" r="28.500" fill="#1c6dad" stroke="#fff" stroke-width="9.500"/>

      <g class="attribution">
        <path d="M54 2050q1 6-5 10-2-6 5-10zM47 2061q7-3 12 2-6 5-3 10 1 4 5 5-4 9-8 9-3 0-6-1.500Q44 2088 41 2087 32 2081 33 2070 35 2059 44 2061.500z"/>
        <text x="67" y="2086" textLength="114">Maps</text>
      </g>
      <text class="legal" x="1055.700" y="2082" textLength="71">Legal</text>
    </svg>
    <div class="actions"><button class="button">OK</button><button class="button dark">REMOVE</button></div>
    <footer class="tabs">
      <div class="tab active"><svg class="icon"><use href="#i-games"/></svg><span>Playground</span></div>
      <div class="tab"><svg class="icon"><use href="#i-list"/></svg><span>Status</span></div>
      <div class="tab"><svg class="icon"><use href="#i-copyright"/></svg><span>About</span></div>
      <div class="home faded"></div>
    </footer>
  </section>

  <section class="phone stacked">
    <div class="card">
      <header class="bar"><div class="nav"><div class="back"><svg><use href="#i-back"/></svg>Back</div><h1 class="nav-title">Geocoder/Reverse Geocoder</h1></div></header>
      <ul class="form">
        <li class="form-row"><div class="copy"><h2>Service</h2><p>Service to use for<br>geocoding/reverse</p></div><b>Apple (Forward)</b><svg class="chevron"><use href="#i-chevron"/></svg></li>
        <li class="form-row"><div class="copy"><h2>Address</h2><p>Address to geocode</p></div><b>infinite loop 1</b><svg class="chevron"><use href="#i-chevron"/></svg></li>
        <li class="form-row"><div class="copy"><h2>Proximity Region</h2><p>Better contextualize received results</p></div><b>not set</b><svg class="chevron"><use href="#i-chevron"/></svg></li>
        <li class="form-row"><div class="copy"><h2>Locale</h2><p>Language of the results</p></div><b>not set</b><svg class="chevron"><use href="#i-chevron"/></svg></li>
        <li class="form-action"><button class="button">Create Request</button></li>
      </ul>
    </div>
    <div class="status located over"><span class="time">6:25</span><svg class="arrow" viewBox="0 0 24 24"><path d="M20.500 3.500L4 10.800l8.500.7.700 8.500z" fill="none" stroke="#000" stroke-width="1.900" stroke-linejoin="round"/></svg><svg class="signal"><use href="#i-signal"/></svg><svg class="wifi"><use href="#i-wifi"/></svg><svg class="battery"><use href="#i-battery"/></svg></div>
    <div class="sheet">
      <h2 class="sheet-title">RAW RESULT</h2>
      <pre class="result">[{
    coordinates = 
lat:37.331656,lng:−122.0301426,
    name=Optional("1 Infinite Loop")
    postalCode = '95014'
    subAdministrativeArea = 'Santa Clara'
    formattedAddress = '1 Infinite Loop 
Cupertino CA 95014
United States'
    country = 'United States'
    countryCode = 'US'
    subThroughfare = '1'
    locality = 'Cupertino'
    administrativeArea = 'CA'
    name = '1 Infinite Loop'
    POI = 'Apple Campus'
    throughfare = 'Infinite Loop'
    subLocality = ''
}]</pre>
      <div class="home faded"></div>
    </div>
  </section>

</main>
</body>
</html>
```

FILE: styles.css
```css
/* 1rem is ten points of the phone screens */
html { font-size: 25.237px; }
* { box-sizing: border-box; margin: 0; padding: 0; }
body { width: 4096px; height: 2130px; overflow: hidden; background: #fff; color: #000; font-family: Inter, "Liberation Sans", sans-serif; }
.sprite { position: absolute; width: 0; height: 0; }
svg { display: block; fill: currentColor; flex: none; }
ul { list-style: none; }
button { border: 0; }

.board { display: flex; gap: 2.1rem; height: 100%; }
.phone { position: relative; display: flex; flex-direction: column; width: 39rem; height: 100%; flex: none; overflow: hidden; background: #fff; }
.phone::after { content: ""; position: absolute; inset: 0; border: 1px solid rgba(0, 0, 0, .25); pointer-events: none; }

/* status and navigation bars */
.bar { flex: none; height: 9.12rem; background: #f7f7f7; border-bottom: 1px solid #b2b2b2; }
.status { display: flex; align-items: center; height: 4.7rem; padding: .14rem 1.75rem 0 3.55rem; }
.time { font-size: 1.6rem; font-weight: 600; letter-spacing: -.02em; margin-top: .28rem; margin-right: auto; }
.located { padding-left: 2.82rem; }
.located .time { margin-right: .27rem; }
.arrow { width: 1.35rem; height: 1.35rem; margin-right: auto; margin-top: .14rem; }
.signal { width: 1.7rem; height: .4rem; margin: .95rem .55rem 0 0; }
.wifi { width: 1.66rem; height: 1.25rem; margin: .2rem .52rem 0 0; }
.battery { width: 2.64rem; height: 1.22rem; margin-top: .2rem; }
.nav { display: grid; grid-template-columns: 1fr auto 1fr; align-items: center; height: 4.42rem; }
.nav-title { grid-column: 2; font-size: 1.69rem; font-weight: 600; letter-spacing: -.01em; line-height: 2rem; }
.nav-title.snug { letter-spacing: -.02em; }
.back { grid-column: 1; grid-row: 1; display: flex; align-items: center; gap: .78rem; padding-left: .8rem; color: #1c6dad; font-size: 1.68rem; letter-spacing: -.02em; line-height: 2rem; }
.back svg { width: 1.2rem; height: 2rem; }
.tools { grid-column: 3; display: flex; justify-content: flex-end; align-items: center; gap: 1.98rem; padding-right: 1.46rem; color: #1c6dad; font-size: 1.68rem; letter-spacing: -.02em; }
.locate { width: 2.75rem; height: 2.75rem; }

/* lists */
.menu, .form { flex: 1; min-height: 0; overflow: hidden; }
.copy { flex: 1; padding-top: .16rem; }
.copy h2 { font-size: 1.68rem; font-weight: 500; line-height: 2.03rem; letter-spacing: -.017em; white-space: nowrap; }
.copy p { font-size: 1.27rem; line-height: 1.56rem; letter-spacing: .005em; color: #555; white-space: nowrap; }
.menu-row, .form-row { position: relative; display: flex; align-items: center; }
.menu-row { padding: 1.525rem 2.01rem 1.525rem 2rem; gap: 1.52rem; }
.menu-row .icon { width: 2.5rem; height: 2.5rem; color: #1c6dad; }
.menu-row::after, .form-row::after, .form-action::after { content: ""; position: absolute; left: 2rem; right: 0; bottom: 0; border-bottom: 1px solid #c2c2c5; }
.chevron { width: .8rem; height: 1.3rem; color: #c3c3c5; }
.form-row { padding: .94rem 2.01rem .945rem 1.72rem; min-height: 5.635rem; }
.form-row b { font-size: 1.3rem; font-weight: 600; letter-spacing: -.002em; color: #1c6dad; margin-right: 1.82rem; white-space: nowrap; }
.form-action { position: relative; display: flex; justify-content: center; padding: 1.62rem 0 1.63rem; }
.button { width: 20rem; height: 4.4rem; background: #1c6dad; color: #fff; font: 400 1.48rem/4.4rem Inter, "Liberation Sans", sans-serif; text-align: center; }

/* tab bar */
.tabs { position: relative; flex: none; display: grid; grid-template-columns: repeat(3, 1fr); align-content: start; height: 8.33rem; padding-top: .63rem; background: #f7f7f7; border-top: 1px solid #b2b2b2; }
.tab { display: flex; flex-direction: column; align-items: center; gap: .38rem; color: #949494; font-size: .99rem; font-weight: 600; line-height: 1.2rem; letter-spacing: .01em; }
.tab .icon { width: 2.5rem; height: 2.5rem; }
.tab.active { color: #1c6dad; }
.home { position: absolute; left: 12.55rem; bottom: .8rem; width: 13.9rem; height: .5rem; border-radius: .25rem; background: #000; }
.home.faded { background: linear-gradient(100deg, #555 0%, #6f6f6f 60%, #707070 85%, #aaa 100%); }

/* geofence screen */
.hint { flex: none; height: 2.98rem; font-size: 1.43rem; line-height: 3rem; text-align: center; }
.map { width: 39rem; height: 58.5rem; overflow: hidden; }
.map path { vector-effect: non-scaling-stroke; }
.actions { flex: 1; display: flex; justify-content: center; gap: 4rem; padding-top: .57rem; }
.actions .button { width: 15rem; }
.button.dark { background: #555; }
.minor-case, .minor-fill, .street-case, .street-fill, .avenue-case, .avenue-fill, .boulevard-case, .boulevard-fill, .ramp-case, .ramp-fill, .freeway-case, .freeway-fill { fill: none; stroke-linejoin: round; }
.minor-case { stroke: #e1e1dd; stroke-width: 4.8px; stroke-linecap: round; }
.minor-fill { stroke: #fff; stroke-width: 2.8px; stroke-linecap: round; }
.street-case { stroke: #d9d5cf; stroke-width: 6.8px; }
.street-fill { stroke: #fff; stroke-width: 5.2px; }
.avenue-case { stroke: #f8c48e; stroke-width: 7.8px; }
.avenue-fill { stroke: #fdf7d0; stroke-width: 5.7px; }
.boulevard-case { stroke: #f8c48e; stroke-width: 11.4px; }
.boulevard-fill { stroke: #fcf4cc; stroke-width: 9.2px; }
.plaza { fill: #fcf4cc; stroke: #f8c48e; stroke-width: 1px; }
.ramp-case { stroke: #f8c796; stroke-width: 6.6px; }
.ramp-fill { stroke: #ffe4a6; stroke-width: 4.6px; }
.freeway-case { stroke: #f6b95c; stroke-width: 12.2px; }
.freeway-fill { stroke: #ffe03f; stroke-width: 10.4px; stroke-linecap: round; }
.beige { fill: #f6eedc; }
.water { fill: #aee0f5; }
.park { fill: #cdebbd; }
.slab { fill: #dfe5e0; }
.ferry { fill: none; stroke: #8acff6; stroke-width: 2.2px; }
.landmark { fill: #79735f; stroke: #fff; stroke-width: 4px; paint-order: stroke; stroke-linejoin: round; }
.landmark-detail { fill: #fff; stroke: #f4f0e6; stroke-width: 1px; }
.map text { paint-order: stroke; stroke: #faf6f0; stroke-width: 5px; stroke-linejoin: round; }
.poi-brown { font-size: 22px; font-weight: 700; fill: #79735f; }
.district { font-size: 31px; font-weight: 600; fill: #a9a9a7; }
.map .district text { stroke-width: 2px; }
.city { font-size: 76px; font-weight: 500; fill: #8f8b84; }
.road { font-size: 26px; font-weight: 500; fill: #626264; }
.poi { font-size: 26.500px; font-weight: 600; fill: #dc9420; }
.map .route { font-size: 30px; font-weight: 700; stroke: none; }
.fence { fill: none; stroke: #a6a6a6; stroke-width: 9px; stroke-linecap: round; stroke-dasharray: 11 20 .01 10; stroke-dashoffset: -22.8px; }
.area { fill: rgba(0, 0, 255, .3); stroke: #00f; stroke-width: 3px; stroke-linejoin: round; }
.attribution { fill: #5e5c58; font-size: 47px; font-weight: 600; }
.map .attribution text { stroke: none; }
.map .legal { font-size: 26px; font-weight: 600; fill: #777; text-decoration: underline; stroke-width: 3px; }

/* result sheet over the pushed-back form */
.stacked { background: #000; }
.card { position: absolute; left: 0; top: 2.13rem; width: 39rem; height: 50rem; transform: scale(.954); transform-origin: 50% 0; border-radius: 3.2rem 3.2rem 0 0; overflow: hidden; background: #f0f0f0; }
.card .bar { display: flex; flex-direction: column; justify-content: flex-end; background: #e9e9e9; }
.card .back { color: #848484; }
.card .nav { padding-top: .06rem; }
.card .nav-title { letter-spacing: -.019em; }
.card .button { background: #1b67a2; color: #eee; }
.over { position: absolute; left: 0; right: 0; top: 0; clip-path: inset(2.1rem .9rem 0 .9rem round 3rem 3rem 0 0); }
.sheet { position: absolute; left: 0; right: 0; top: 47.63rem; bottom: 0; padding: 1.5rem 3rem 0 3.05rem; border-radius: 1rem 1rem 0 0; background: #fff; }
.sheet-title { font-size: 1.65rem; font-weight: 600; line-height: 2rem; letter-spacing: .008em; text-align: center; }
.result { margin-top: 2.36rem; font: 1.2rem/1.393rem "DejaVu Sans Mono", monospace; }
```
